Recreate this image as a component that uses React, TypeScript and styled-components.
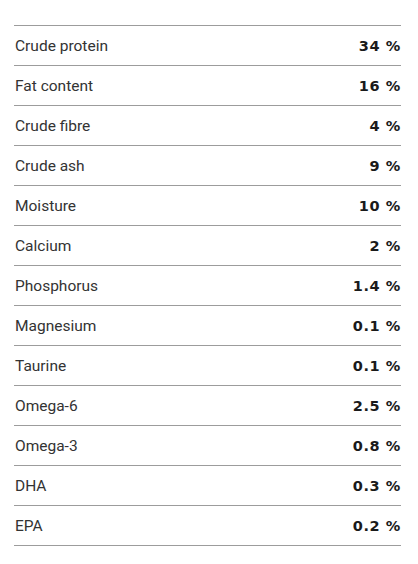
import React from 'react';
import styled, { createGlobalStyle } from 'styled-components';

const GlobalStyle = createGlobalStyle`
  body {
    margin: 0;
    background: #ffffff;
  }
`;

const Table = styled.div`
  margin: 25px 17px 0 14px;
  border-top: 1px solid #9c9c9c;
`;

const Row = styled.div`
  display: flex;
  align-items: center;
  justify-content: space-between;
  height: 39px;
  border-bottom: 1px solid #9c9c9c;
`;

const Label = styled.span`
  font-family: Roboto, 'Liberation Sans', sans-serif;
  font-size: 15.5px;
  color: #333333;
  padding: 1px 0 0 1px;
`;

const Value = styled.span`
  font-family: 'DejaVu Sans', sans-serif;
  font-weight: bold;
  font-size: 14.5px;
  letter-spacing: 0.6px;
  color: #1a1a1a;
`;

const rows: [string, string][] = [
  ['Crude protein', '34 %'],
  ['Fat content', '16 %'],
  ['Crude fibre', '4 %'],
  ['Crude ash', '9 %'],
  ['Moisture', '10 %'],
  ['Calcium', '2 %'],
  ['Phosphorus', '1.4 %'],
  ['Magnesium', '0.1 %'],
  ['Taurine', '0.1 %'],
  ['Omega-6', '2.5 %'],
  ['Omega-3', '0.8 %'],
  ['DHA', '0.3 %'],
  ['EPA', '0.2 %'],
];

const App = () => (
  <>
    <GlobalStyle />
    <Table>
      {rows.map(([label, value]) => (
        <Row key={label}>
          <Label>{label}</Label>
          <Value>{value}</Value>
        </Row>
      ))}
    </Table>
  </>
);

export default App;
